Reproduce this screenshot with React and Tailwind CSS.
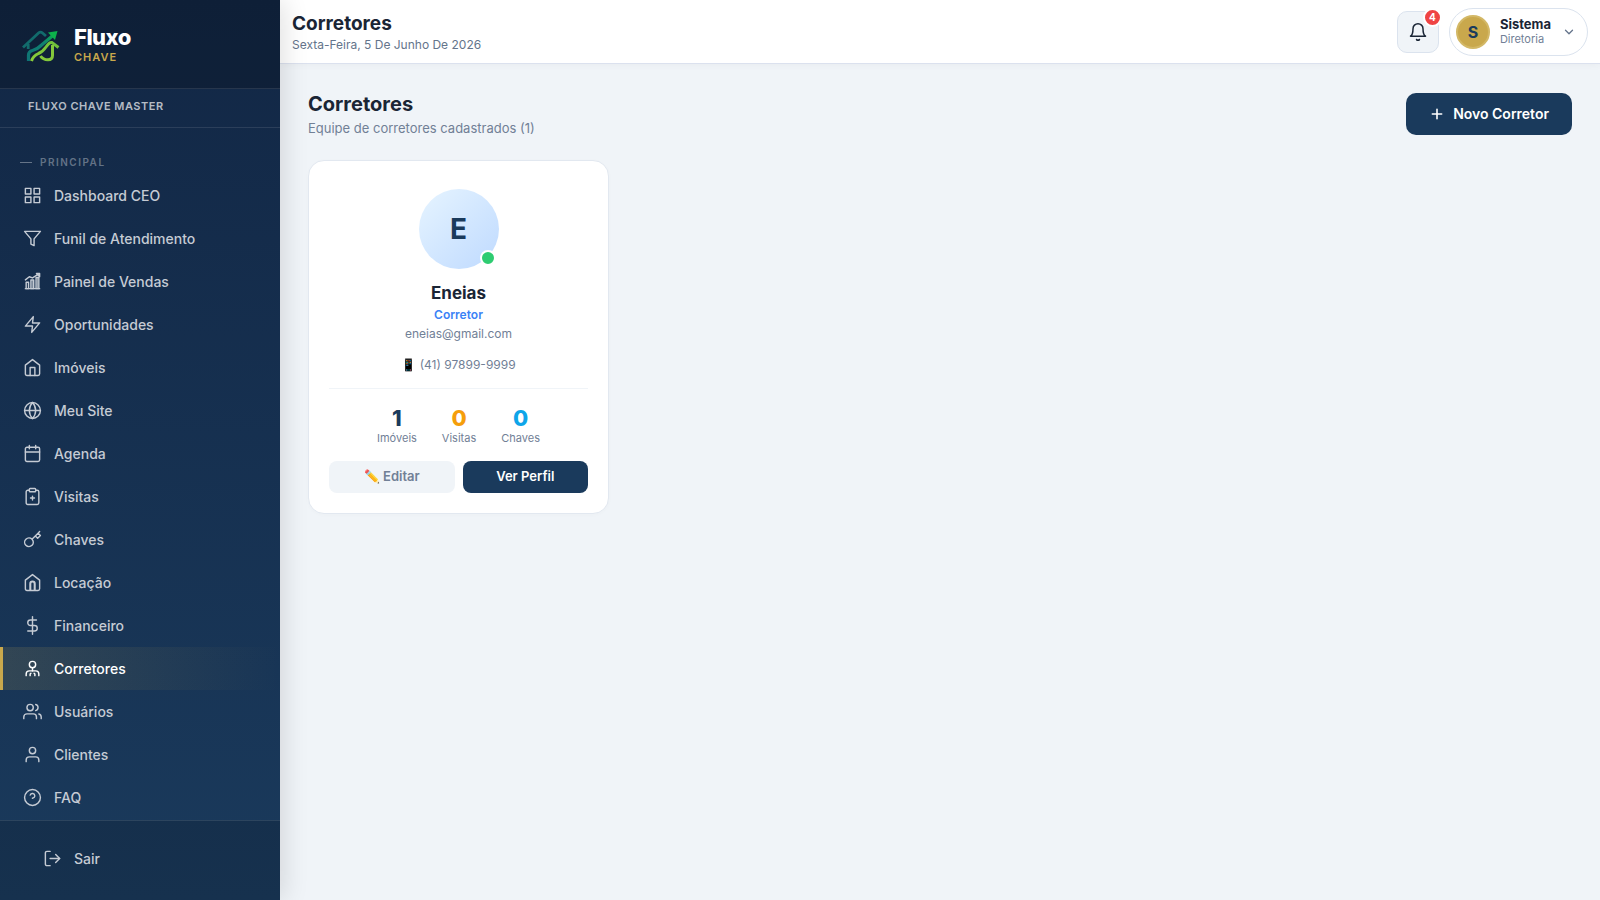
const stroke = {
  viewBox: "0 0 24 24",
  fill: "none",
  stroke: "currentColor",
  strokeWidth: 1.8,
  strokeLinecap: "round",
  strokeLinejoin: "round",
  "aria-hidden": true,
};

function Icon({ children, className = "size-[19px]" }) {
  return (
    <svg {...stroke} className={`shrink-0 ${className}`}>
      {children}
    </svg>
  );
}

const icons = {
  grid: (
    <>
      <rect x="3" y="3" width="7" height="7" />
      <rect x="14" y="3" width="7" height="7" />
      <rect x="14" y="14" width="7" height="7" />
      <rect x="3" y="14" width="7" height="7" />
    </>
  ),
  funnel: <polygon points="22 3 2 3 10 12.46 10 19 14 21 14 12.46 22 3" />,
  chart: (
    <>
      <path d="M3 21h18" />
      <rect x="4" y="13" width="3" height="8" />
      <rect x="10" y="10" width="3.5" height="11" />
      <rect x="16.5" y="7" width="3.5" height="14" />
      <path d="M11.7 11v10M18.2 8v13" strokeWidth="1" />
      <path d="M3 10l5-4 4 1.5 8-5" />
      <path d="M17 2h4v4z" />
    </>
  ),
  bolt: <polygon points="13 2 3 14 12 14 11 22 21 10 12 10 13 2" />,
  home: (
    <>
      <path d="M3 9l9-7 9 7v11a2 2 0 0 1-2 2H5a2 2 0 0 1-2-2z" />
      <polyline points="9 22 9 12 15 12 15 22" />
    </>
  ),
  globe: (
    <>
      <circle cx="12" cy="12" r="10" />
      <path d="M2 12h20" />
      <path d="M12 2a15.3 15.3 0 0 1 4 10 15.3 15.3 0 0 1-4 10 15.3 15.3 0 0 1-4-10 15.3 15.3 0 0 1 4-10z" />
    </>
  ),
  calendar: (
    <>
      <rect x="3" y="4" width="18" height="18" rx="2" />
      <path d="M16 2v4M8 2v4M3 10h18" />
    </>
  ),
  clipboard: (
    <>
      <path d="M16 4h2a2 2 0 0 1 2 2v14a2 2 0 0 1-2 2H6a2 2 0 0 1-2-2V6a2 2 0 0 1 2-2h2" />
      <rect x="8" y="2" width="8" height="4" rx="1" />
      <path d="M12 11.5v5M9.5 14h5" />
    </>
  ),
  key: (
    <path d="M21 2l-2 2m-7.61 7.61a5.5 5.5 0 1 1-7.778 7.778 5.5 5.5 0 0 1 7.777-7.777zm0 0L15.5 7.5m0 0l3 3L22 7l-3-3m-3.5 3.5L19 4" />
  ),
  rent: (
    <>
      <path d="M3 9l9-7 9 7v11a2 2 0 0 1-2 2H5a2 2 0 0 1-2-2z" />
      <path d="M9.2 21.5v-8a2.8 2.8 0 0 1 5.6 0v8" strokeWidth="2.6" />
    </>
  ),
  dollar: (
    <>
      <path d="M12 1v22" />
      <path d="M17 5H9.5a3.5 3.5 0 0 0 0 7h5a3.5 3.5 0 0 1 0 7H6" />
    </>
  ),
  broker: (
    <>
      <circle cx="12" cy="7" r="4" />
      <path d="M20 21v-2a4 4 0 0 0-4-4H8a4 4 0 0 0-4 4v2" />
      <path d="M12 11v4" />
      <path d="M9 21v-2l1-1M15 21v-2l-1-1" />
    </>
  ),
  users: (
    <>
      <path d="M17 21v-2a4 4 0 0 0-4-4H5a4 4 0 0 0-4 4v2" />
      <circle cx="9" cy="7" r="4" />
      <path d="M23 21v-2a4 4 0 0 0-3-3.87M16 3.13a4 4 0 0 1 0 7.75" />
    </>
  ),
  user: (
    <>
      <path d="M20 21v-2a4 4 0 0 0-4-4H8a4 4 0 0 0-4 4v2" />
      <circle cx="12" cy="7" r="4" />
    </>
  ),
  help: (
    <>
      <circle cx="12" cy="12" r="10" />
      <path d="M9.09 9a3 3 0 0 1 5.83 1c0 2-3 3-3 3" />
    </>
  ),
  logout: (
    <>
      <path d="M9 21H5a2 2 0 0 1-2-2V5a2 2 0 0 1 2-2h4" />
      <polyline points="16 17 21 12 16 7" />
      <path d="M21 12H9" />
    </>
  ),
};

const menu = [
  { label: "Dashboard CEO", icon: "grid" },
  { label: "Funil de Atendimento", icon: "funnel" },
  { label: "Painel de Vendas", icon: "chart" },
  { label: "Oportunidades", icon: "bolt" },
  { label: "Imóveis", icon: "home" },
  { label: "Meu Site", icon: "globe" },
  { label: "Agenda", icon: "calendar" },
  { label: "Visitas", icon: "clipboard" },
  { label: "Chaves", icon: "key" },
  { label: "Locação", icon: "rent" },
  { label: "Financeiro", icon: "dollar" },
  { label: "Corretores", icon: "broker", active: true },
  { label: "Usuários", icon: "users" },
  { label: "Clientes", icon: "user" },
  { label: "FAQ", icon: "help" },
];

const brokers = [
  {
    name: "Eneias",
    role: "Corretor",
    email: "eneias@gmail.com",
    phone: "(41) 97899-9999",
    stats: [
      { label: "Imóveis", value: 1, color: "text-[#1a3a5c]" },
      { label: "Visitas", value: 0, color: "text-[#f59e0b]" },
      { label: "Chaves", value: 0, color: "text-[#0ea5e9]" },
    ],
  },
];

function Logo() {
  return (
    <svg viewBox="0 0 40 40" className="size-10 shrink-0" fill="none" aria-hidden="true">
      <defs>
        <linearGradient id="flow" x1="6" y1="36" x2="36" y2="8" gradientUnits="userSpaceOnUse">
          <stop offset="0" stopColor="#0f7275" />
          <stop offset="0.6" stopColor="#0f8070" />
          <stop offset="1" stopColor="#0db14b" />
        </linearGradient>
        <linearGradient id="leaf" x1="10" y1="36" x2="34" y2="18" gradientUnits="userSpaceOnUse">
          <stop offset="0" stopColor="#8ccf3a" />
          <stop offset="1" stopColor="#6fbf3b" />
        </linearGradient>
      </defs>
      <path d="M3 22.5L18.5 8Q20.5 6.3 22.5 8L26 11" stroke="#126b6c" strokeWidth="2.8" />
      <path d="M8.2 19v5" stroke="#126b6c" strokeWidth="2.8" />
      <path d="M8.5 36v-6Q8.5 26.5 12.5 25.5Q17 24.5 21 20.5L33.5 10" stroke="url(#flow)" strokeWidth="3.2" />
      <path d="M28 7.5L37.5 6l-2.5 9z" fill="#0db14b" />
      <path
        d="M11.5 36Q13 31 18.5 28.5Q22.5 27 26 22Q29.5 16.8 32 17.5L38.5 22.5"
        stroke="url(#leaf)"
        strokeWidth="3"
      />
      <path d="M32.5 20v10.5Q32.5 34.8 28 34.8Q23 34.8 20.5 31" stroke="#83c83b" strokeWidth="3" />
    </svg>
  );
}

function Sidebar() {
  return (
    <aside className="relative z-20 flex w-[280px] shrink-0 flex-col bg-linear-to-b from-[#122745] to-[#1a3a5c] text-[#c5cbd4] shadow-[4px_0_24px_rgba(0,0,0,0.12)]">
      <div className="flex items-center gap-[14px] border-b border-white/10 bg-black/20 px-5 pt-[25px] pb-[23px]">
        <Logo />
        <div>
          <div className="text-[22px] leading-6 font-extrabold tracking-[-0.5px] text-white">Fluxo</div>
          <div className="text-[11px] leading-4 font-semibold tracking-[1px] text-[#c9a84c]">CHAVE</div>
        </div>
      </div>
      <div className="border-b border-white/10 px-7 pt-2 pb-3 text-[11px] leading-[18px] font-semibold tracking-[0.5px] text-white/70">
        FLUXO CHAVE MASTER
      </div>
      <nav className="flex-1">
        <div className="flex items-center gap-2 px-5 pt-[27px] pb-[5px] text-[10px] leading-[14px] font-semibold tracking-[1.5px] text-white/35">
          <span className="h-px w-3 bg-white/35" />
          PRINCIPAL
        </div>
        <ul>
          {menu.map((item) => (
            <li key={item.label}>
              <a
                href="#"
                aria-current={item.active ? "page" : undefined}
                className={`flex h-[43px] items-center gap-3 border-l-3 px-5 text-sm font-medium ${
                  item.active
                    ? "border-[#c9a84c] bg-linear-to-r from-[#c9a84c]/15 to-transparent text-white"
                    : "border-transparent"
                }`}
              >
                <Icon>{icons[item.icon]}</Icon>
                {item.label}
              </a>
            </li>
          ))}
        </ul>
      </nav>
      <div className="border-t border-white/10 bg-black/15 px-5 pt-4 pb-5">
        <button className="flex h-[43px] items-center gap-3 px-[23px] text-sm font-medium">
          <Icon>{icons.logout}</Icon>
          Sair
        </button>
      </div>
    </aside>
  );
}

function Topbar() {
  return (
    <header className="flex h-16 items-center justify-between border-b border-[#dbe1ee] bg-white px-3 shadow-[0_1px_8px_rgba(0,0,0,0.04)]">
      <div className="pt-0.5">
        <div className="text-[19px] leading-6 font-bold text-[#1a2535]">Corretores</div>
        <div className="text-xs leading-[18px] text-[#64748b]">Sexta-Feira, 5 De Junho De 2026</div>
      </div>
      <div className="flex items-center gap-[10px]">
        <button
          aria-label="Notificações"
          className="relative flex size-[42px] items-center justify-center rounded-[10px] border border-[#dbe3ee] bg-[#f0f4f8] text-[#1a2535]"
        >
          <Icon className="size-5">
            <path d="M18 8A6 6 0 0 0 6 8c0 7-3 9-3 9h18s-3-2-3-9" />
            <path d="M13.73 21a2 2 0 0 1-3.46 0" />
          </Icon>
          <span className="absolute -top-1 -right-1 flex size-[19px] items-center justify-center rounded-full border-2 border-white bg-[#ef4444] text-[10px] font-bold text-white">
            4
          </span>
        </button>
        <button className="flex h-12 items-center gap-[10px] rounded-full border border-[#dbe3ee] bg-white pr-[10px] pl-[6px] text-left">
          <span className="flex size-[34px] items-center justify-center rounded-full border-2 border-[#d3b866] bg-[#c9a84c] text-base font-bold text-[#1a3a5c]">
            S
          </span>
          <span className="flex flex-col">
            <span className="text-[13px] leading-[15px] font-bold text-[#1a2535]">Sistema</span>
            <span className="text-[11px] leading-[14px] text-[#718096]">Diretoria</span>
          </span>
          <svg {...stroke} strokeWidth="2.2" className="mx-px size-[14px] text-[#64748b]">
            <polyline points="6 9 12 15 18 9" />
          </svg>
        </button>
      </div>
    </header>
  );
}

function BrokerCard({ broker }) {
  return (
    <article className="flex flex-col items-center rounded-2xl border border-[#e2e8f0] bg-white px-5 pt-7 pb-5 shadow-[0_1px_4px_rgba(0,0,0,0.02)]">
      <div className="relative flex size-20 items-center justify-center rounded-full bg-linear-to-br from-[#e6f4ff] to-[#bfdaff] text-[28px] font-bold text-[#1a3a5c]">
        {broker.name[0]}
        <span className="absolute right-[3px] bottom-[3px] size-4 rounded-full border-2 border-white bg-[#2ecc71]" />
      </div>
      <h2 className="mt-3 text-[17px] leading-6 font-bold text-[#1a2535]">{broker.name}</h2>
      <div className="text-xs leading-5 font-semibold text-[#3b82f6]">{broker.role}</div>
      <div className="text-xs leading-[18px] text-[#718096]">{broker.email}</div>
      <div className="mt-[13px] text-xs leading-[18px] text-[#718096]">📱 {broker.phone}</div>
      <div className="mt-[14px] flex w-full justify-center gap-[25px] border-t border-[#f0f4f8] pt-[15px]">
        {broker.stats.map((stat) => (
          <div key={stat.label} className="text-center">
            <div className={`text-[22px] leading-7 font-extrabold ${stat.color}`}>{stat.value}</div>
            <div className="text-[11px] leading-3 text-[#718096]">{stat.label}</div>
          </div>
        ))}
      </div>
      <div className="mt-[17px] flex w-full gap-2">
        <button className="h-8 flex-1 rounded-lg bg-[#f0f4f8] text-[13px] font-semibold text-[#718096]">
          ✏️ Editar
        </button>
        <button className="h-8 flex-1 rounded-lg bg-[#1a3a5c] text-[13px] font-semibold text-white">
          Ver Perfil
        </button>
      </div>
    </article>
  );
}

export default function App() {
  return (
    <div className="flex min-h-screen bg-[#f0f4f8] font-['Inter',sans-serif] text-[#1a2535]">
      <Sidebar />
      <div className="min-w-0 flex-1">
        <Topbar />
        <main className="p-7">
          <div className="mb-6 flex items-center justify-between">
            <div>
              <h1 className="text-xl leading-6 font-bold">Corretores</h1>
              <p className="mt-1 text-[13px] leading-4 text-[#718096]">
                Equipe de corretores cadastrados ({brokers.length})
              </p>
            </div>
            <button className="flex h-[42px] items-center gap-2 rounded-[10px] bg-[#1a3a5c] px-[23px] text-sm font-semibold text-white">
              <svg {...stroke} strokeWidth="2.4" className="size-4">
                <path d="M12 5v14M5 12h14" />
              </svg>
              Novo Corretor
            </button>
          </div>
          <div className="grid grid-cols-[repeat(auto-fill,minmax(280px,1fr))] gap-5">
            {brokers.map((broker) => (
              <BrokerCard key={broker.email} broker={broker} />
            ))}
          </div>
        </main>
      </div>
    </div>
  );
}
